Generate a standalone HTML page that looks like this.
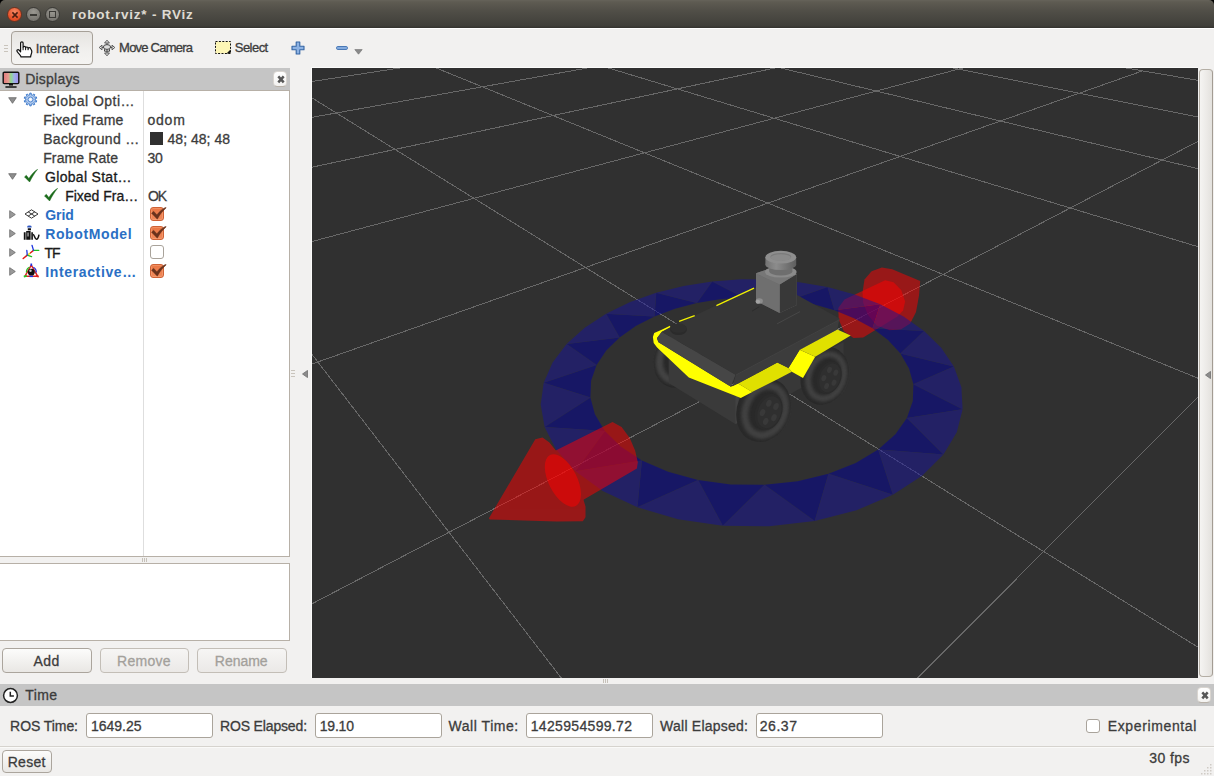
<!DOCTYPE html>
<html><head><meta charset="utf-8"><title>robot.rviz* - RViz</title>
<style>
html,body{margin:0;padding:0;}
body{width:1214px;height:776px;overflow:hidden;position:relative;background:#f2f1f0;font-family:"Liberation Sans",sans-serif;}
.a{position:absolute;box-sizing:border-box;}
.t{position:absolute;white-space:pre;line-height:normal;-webkit-text-stroke:0.3px currentColor;}
.btn{position:absolute;box-sizing:border-box;border:1px solid #aba59d;border-radius:4px;background:linear-gradient(#fcfcfb,#e9e7e4);}
.btn.dis{border-color:#c3beb7;background:linear-gradient(#f6f5f4,#ebe9e7);}
.inp{position:absolute;box-sizing:border-box;border:1px solid #aaa49b;border-radius:3px;background:#fff;}
.xb{position:absolute;box-sizing:border-box;width:14.4px;height:15.6px;border:1px solid #d9d5d0;border-bottom-color:#b9b2a9;border-radius:4.5px;background:linear-gradient(#ffffff,#f3f2f0);}
.cb{position:absolute;box-sizing:border-box;width:14px;height:14px;border-radius:3px;}
.cb.on{background:linear-gradient(#ea7644,#f0895b);border:1px solid #cf6236;box-shadow:inset 0 0 0 1px rgba(255,190,150,.35);}
.cb.off{background:#fff;border:1px solid #a9a39b;}
</style></head><body>

<div class="a" style="left:0;top:0;width:1214px;height:8px;background:#000"></div>
<div class="a" style="left:0;top:0;width:1214px;height:28px;border-radius:5px 5px 0 0;background:linear-gradient(#66635a 0,#5e5b52 2px,#504e47 40%,#403f3a 92%,#33322e 100%);"></div>
<div class="a" style="left:7.0px;top:7.0px;width:15px;height:15px;border-radius:50%;border:1px solid #6b3321;background:radial-gradient(circle at 50% 30%,#f58a66,#e8532b 60%,#d6421c)"></div><svg class="a" style="left:10.5px;top:10.5px" width="8" height="8" viewBox="0 0 8 8"><path d="M1.4 1.4L6.6 6.6M6.6 1.4L1.4 6.6" stroke="#4a1d10" stroke-width="1.5" fill="none"/></svg>
<div class="a" style="left:26.299999999999997px;top:7.0px;width:15px;height:15px;border-radius:50%;border:1px solid #3a3935;background:radial-gradient(circle at 50% 30%,#9a9891,#7e7c76 60%,#6c6a65)"></div><div class="a" style="left:30.299999999999997px;top:14.0px;width:7px;height:1.5px;background:#3b3a36"></div>
<div class="a" style="left:45.0px;top:7.0px;width:15px;height:15px;border-radius:50%;border:1px solid #3a3935;background:radial-gradient(circle at 50% 30%,#9a9891,#7e7c76 60%,#6c6a65)"></div><div class="a" style="left:49.0px;top:11.0px;width:7px;height:7px;border:1.3px solid #3b3a36"></div>
<span class="t " style="left:72.10px;top:6.78px;font-size:13.5px;letter-spacing:0.776px;color:#dfdbd2;font-weight:bold;-webkit-text-stroke:0;">robot.rviz* - RViz</span>
<div class="a" style="left:0;top:28px;width:1214px;height:1px;background:#fff"></div>
<div class="a" style="left:4px;top:45px;width:4px;height:1px;background:#c9c4bc"></div>
<div class="a" style="left:4px;top:48px;width:4px;height:1px;background:#c9c4bc"></div>
<div class="a" style="left:4px;top:51px;width:4px;height:1px;background:#c9c4bc"></div>
<div class="btn" style="left:11px;top:31px;width:82px;height:34px;border-color:#a6a098;background:linear-gradient(#e6e4e1,#f1f0ee 60%,#f5f4f2)"></div>
<svg class="a" style="left:15.5px;top:40.5px" width="17" height="17" viewBox="0 0 17 17"><path d="M4.600 10.800V2.100C4.600 0.500 7.100 0.500 7.100 2.100V6.600C7.100 5 9.600 5 9.600 6.600V7.200C9.600 5.600 12.100 5.600 12.100 7.200V7.800C12.100 6.300 14.600 6.300 14.700 7.800C15.800 9 15.900 11.500 15.300 13C15 14 14.600 14.800 14.600 15.900H5C4.800 14.600 3.800 13.800 2.800 12.600C1.900 11.600 1 10.800 0.900 9.900C0.800 8.700 2.200 8.200 3 9z" fill="#fff" stroke="#111" stroke-width="1.200" stroke-linejoin="round"/><path d="M7.100 6.600v2.600M9.600 7.200v2M12.100 7.800v1.400" stroke="#111" stroke-width="1" fill="none"/></svg>
<span class="t " style="left:35.70px;top:41.23px;font-size:13px;letter-spacing:-0.039px;color:#3c3c3c;">Interact</span>
<svg class="a" style="left:98px;top:39px" width="18" height="18" viewBox="0 0 18 18" fill="none" stroke="#555" stroke-width="1"><path d="M9 1.2L6.6 4h4.8zM9 16.8L6.6 14h4.8zM1.2 8.5L4 6.2v4.6zM16.8 8.5L14 6.2v4.6z" fill="#eee"/><path d="M9 4v10M4 8.5h10"/><ellipse cx="9" cy="8" rx="3.6" ry="2.4" fill="#ddd" stroke="#444"/><path d="M6.5 10.2v2h5v-2" stroke="#444"/></svg>
<span class="t " style="left:119.10px;top:40.23px;font-size:13px;letter-spacing:-0.779px;color:#3c3c3c;">Move Camera</span>
<svg class="a" style="left:215px;top:41px" width="16" height="13" viewBox="0 0 16 13"><rect x="0.5" y="0.5" width="15" height="12" fill="#fdf6b6" stroke="#111" stroke-width="1" stroke-dasharray="2 1.4"/><path d="M15.5 8.5v4h-4z" fill="#111"/></svg>
<span class="t " style="left:234.80px;top:40.23px;font-size:13px;letter-spacing:-0.545px;color:#3c3c3c;">Select</span>
<svg class="a" style="left:291px;top:41px" width="14" height="14" viewBox="0 0 14 14"><path d="M5.2 1h3.6v4.2H13v3.6H8.8V13H5.2V8.8H1V5.2h4.2z" fill="#8db2e3" stroke="#3465a4" stroke-width="1.1" stroke-linejoin="round"/></svg>
<svg class="a" style="left:336px;top:45.5px" width="13" height="5" viewBox="0 0 13 5"><rect x="0.6" y="0.6" width="10.8" height="2.8" rx="1" fill="#8db2e3" stroke="#3d6fb0" stroke-width="1"/></svg>
<svg class="a" style="left:354px;top:49px" width="9" height="6" viewBox="0 0 9 6"><path d="M0.8 0.6h7.4L4.5 5.2z" fill="#8a8a8a" stroke="#6e6e6e" stroke-width=".6"/></svg>
<div class="a" style="left:0;top:68px;width:290px;height:22px;background:#c5c5c5"></div>
<svg class="a" style="left:2px;top:71px" width="18" height="18" viewBox="0 0 18 18"><defs><linearGradient id="mg" x1="0" x2="1" y1="0" y2="0"><stop offset="0" stop-color="#e2777a"/><stop offset=".33" stop-color="#e59a90"/><stop offset=".5" stop-color="#8fd98f"/><stop offset=".7" stop-color="#9fb0e8"/><stop offset="1" stop-color="#a08cf0"/></linearGradient></defs><rect x="1.2" y="1.2" width="15.6" height="11.4" rx="1" fill="url(#mg)" stroke="#111" stroke-width="1.4"/><path d="M7 13h4v1.6H7z" fill="#111"/><path d="M4 16h10" stroke="#111" stroke-width="1.6" stroke-linecap="round"/></svg>
<span class="t " style="left:25.20px;top:71.13px;font-size:14px;letter-spacing:0.218px;color:#3c3c3c;">Displays</span>
<div class="xb" style="left:272.8px;top:71.400px"><svg width="13" height="14" viewBox="0 0 13 14" style="position:absolute;left:0;top:0"><path d="M4.300 4.400l5.400 6M9.700 4.400L4.300 10.400" stroke="#575757" stroke-width="2.500"/></svg></div>
<div class="a" style="left:-1px;top:90px;width:291px;height:467px;background:#fff;border:1px solid #b7b0a7"></div>
<div class="a" style="left:143px;top:91px;width:1px;height:465px;background:#dedede"></div>
<svg class="a" style="left:8px;top:97.0px" width="9" height="7" viewBox="0 0 9 7"><path d="M0.700 0.700h7.600L4.500 6.300z" fill="#8e8e8e" stroke="#666" stroke-width=".8" stroke-linejoin="round"/></svg>
<svg class="a" style="left:23px;top:92px" width="15" height="15" viewBox="-7.5 -7.5 15 15"><path d="M-0.79 -4.63L-0.68 -6.36L0.68 -6.36L0.79 -4.63L2.08 -4.21L3.19 -5.55L4.29 -4.75L3.36 -3.28L4.16 -2.19L5.84 -2.62L6.26 -1.32L4.65 -0.68L4.65 0.68L6.26 1.32L5.84 2.62L4.16 2.19L3.36 3.28L4.29 4.75L3.19 5.55L2.08 4.21L0.79 4.63L0.68 6.36L-0.68 6.36L-0.79 4.63L-2.08 4.21L-3.19 5.55L-4.29 4.75L-3.36 3.28L-4.16 2.19L-5.84 2.62L-6.26 1.32L-4.65 0.68L-4.65 -0.68L-6.26 -1.32L-5.84 -2.62L-4.16 -2.19L-3.36 -3.28L-4.29 -4.75L-3.19 -5.55L-2.08 -4.21z" fill="#b3cbed" stroke="#3f7bcb" stroke-width="1" stroke-linejoin="round"/><circle r="2.500" fill="#dfe9f7" stroke="#3f7bcb" stroke-width=".9"/><circle r="1.100" fill="#fff"/></svg>
<span class="t " style="left:45.20px;top:92.63px;font-size:14px;letter-spacing:0.485px;color:#3c3c3c;">Global Opti…</span>
<span class="t " style="left:43.20px;top:111.63px;font-size:14px;letter-spacing:0.164px;color:#3c3c3c;">Fixed Frame</span>
<span class="t " style="left:147.50px;top:111.63px;font-size:14px;letter-spacing:0.767px;color:#3c3c3c;">odom</span>
<span class="t " style="left:43.20px;top:130.63px;font-size:14px;letter-spacing:0.307px;color:#3c3c3c;">Background …</span>
<div class="a" style="left:150px;top:132.0px;width:13px;height:13px;background:#303030"></div>
<span class="t " style="left:167.50px;top:130.63px;font-size:14px;letter-spacing:0.028px;color:#3c3c3c;">48; 48; 48</span>
<span class="t " style="left:43.20px;top:149.63px;font-size:14px;letter-spacing:0.118px;color:#3c3c3c;">Frame Rate</span>
<span class="t " style="left:147.50px;top:149.63px;font-size:14px;letter-spacing:-0.262px;color:#3c3c3c;">30</span>
<svg class="a" style="left:8px;top:173.0px" width="9" height="7" viewBox="0 0 9 7"><path d="M0.700 0.700h7.600L4.500 6.300z" fill="#8e8e8e" stroke="#666" stroke-width=".8" stroke-linejoin="round"/></svg>
<svg class="a" style="left:24px;top:169.0px" width="15" height="14" viewBox="0 0 15 14"><path d="M0.500 7.900L2.300 6.300 4.900 9.600C7.300 5.600 10 2.600 13.600 0.300 10.600 4 8 8.200 5.600 13z" fill="#1b6b1b" stroke="#1b6b1b" stroke-width=".5" stroke-linejoin="round"/></svg>
<span class="t " style="left:45.10px;top:168.63px;font-size:14px;letter-spacing:0.295px;color:#1a1a1a;">Global Stat…</span>
<svg class="a" style="left:44px;top:188.0px" width="15" height="14" viewBox="0 0 15 14"><path d="M0.500 7.900L2.300 6.300 4.900 9.600C7.300 5.600 10 2.600 13.600 0.300 10.600 4 8 8.200 5.600 13z" fill="#1b6b1b" stroke="#1b6b1b" stroke-width=".5" stroke-linejoin="round"/></svg>
<span class="t " style="left:65.20px;top:187.63px;font-size:14px;letter-spacing:-0.003px;color:#1a1a1a;">Fixed Fra…</span>
<span class="t " style="left:147.90px;top:187.63px;font-size:14px;letter-spacing:-1.150px;color:#3c3c3c;">OK</span>
<svg class="a" style="left:9px;top:210.0px" width="7" height="9" viewBox="0 0 7 9"><path d="M0.700 0.700v7.600L6.300 4.500z" fill="#9a9a9a" stroke="#6a6a6a" stroke-width=".8" stroke-linejoin="round"/></svg>
<svg class="a" style="left:24px;top:208.5px" width="15" height="10" viewBox="0 0 15 10"><path d="M7.5 0.8L14 5 7.500 9.200 1 5zM4.200 2.900l6.600 4.200M10.800 2.900L4.200 7.100" fill="#fff" stroke="#222" stroke-width=".9" stroke-linejoin="round"/></svg>
<span class="t " style="left:45.20px;top:206.63px;font-size:14px;letter-spacing:-0.050px;color:#2a6fc4;font-weight:bold;-webkit-text-stroke:0;">Grid</span>
<div class="cb on" style="left:150px;top:207.0px"></div><svg class="a" style="left:150px;top:207.0px" width="17" height="14" viewBox="0 0 17 14"><path d="M1.500 6.200L3.600 4.200 6.900 7.800C9.300 4.600 12.300 1.900 15.700 0.200L16.200 0.900C12.500 3.900 9.800 7.600 7.300 12.200z" fill="#6a321d" stroke="#6a321d" stroke-width=".4" stroke-linejoin="round"/></svg>
<svg class="a" style="left:9px;top:229.0px" width="7" height="9" viewBox="0 0 7 9"><path d="M0.700 0.700v7.600L6.300 4.500z" fill="#9a9a9a" stroke="#6a6a6a" stroke-width=".8" stroke-linejoin="round"/></svg>
<svg class="a" style="left:23px;top:225.0px" width="17" height="16" viewBox="0 0 17 16"><ellipse cx="6.400" cy="1.900" rx="2.300" ry="1.300" fill="#2d55c0"/><path d="M4.300 2.400h4.200v.8H4.300z" fill="#dfe6f5"/><path d="M4.800 3.300h3.200v2H4.800z" fill="#111"/><path d="M0.800 7.200h1.800v7.600H0.800zM3.200 5.900h4.400v8.900H3.200zM8.300 7.200h1.600v7.600H8.300z" fill="#111"/><path d="M4.300 7.600h1.500v4H4.300z" fill="#9a9a9a"/><path d="M10 9.600c1.600 0 1.800 4.600 3.400 4.600 1.400 0 2.200-2.400 2.600-4.600" fill="none" stroke="#111" stroke-width="1.500"/></svg>
<span class="t " style="left:45.20px;top:225.63px;font-size:14px;letter-spacing:0.614px;color:#2a6fc4;font-weight:bold;-webkit-text-stroke:0;">RobotModel</span>
<div class="cb on" style="left:150px;top:226.0px"></div><svg class="a" style="left:150px;top:226.0px" width="17" height="14" viewBox="0 0 17 14"><path d="M1.500 6.200L3.600 4.200 6.900 7.800C9.300 4.600 12.300 1.900 15.700 0.200L16.200 0.900C12.500 3.900 9.800 7.600 7.300 12.200z" fill="#6a321d" stroke="#6a321d" stroke-width=".4" stroke-linejoin="round"/></svg>
<svg class="a" style="left:9px;top:248.0px" width="7" height="9" viewBox="0 0 7 9"><path d="M0.700 0.700v7.600L6.300 4.500z" fill="#9a9a9a" stroke="#6a6a6a" stroke-width=".8" stroke-linejoin="round"/></svg>
<svg class="a" style="left:22px;top:244.0px" width="18" height="16" viewBox="0 0 18 16" fill="none" stroke-linecap="round"><path d="M5.300 11.100L1.200 14.500" stroke="#e01818" stroke-width="1.500"/><path d="M5.300 11.100L9.500 12.600" stroke="#22c022" stroke-width="1.500"/><path d="M5.300 11.100L4.800 6.400" stroke="#2038e0" stroke-width="1.300"/><path d="M6.500 10.300L8.300 9" stroke="#e8d820" stroke-width="1.500"/><path d="M8.600 8.800L11.500 6.400" stroke="#e01818" stroke-width="1.400"/><path d="M11.500 6.400H16.700" stroke="#22c022" stroke-width="1.400"/><path d="M11.500 6.400L10 1.300" stroke="#2038e0" stroke-width="1.300"/></svg>
<span class="t " style="left:44.60px;top:244.63px;font-size:14px;letter-spacing:-1.025px;color:#1a1a1a;">TF</span>
<div class="cb off" style="left:150px;top:245.0px"></div>
<svg class="a" style="left:9px;top:267.0px" width="7" height="9" viewBox="0 0 7 9"><path d="M0.700 0.700v7.600L6.300 4.500z" fill="#9a9a9a" stroke="#6a6a6a" stroke-width=".8" stroke-linejoin="round"/></svg>
<svg class="a" style="left:23px;top:263.0px" width="17" height="16" viewBox="0 0 17 16"><path d="M8.300 2.200L14.600 13.200H2z" fill="none" stroke="#e02020" stroke-width="1.400" stroke-linejoin="round"/><path d="M3.400 9.500a5.600 5.600 0 0 1 3-5.200" fill="none" stroke="#20c020" stroke-width="1.200"/><path d="M10.300 4.300a5.600 5.600 0 0 1 3 5.200" fill="none" stroke="#2030e0" stroke-width="1.200"/><circle cx="8.300" cy="9.200" r="3.400" fill="#111"/><circle cx="7.500" cy="7.800" r="1.200" fill="#c8c8c8"/><path d="M8.300 0.500v2.600" stroke="#2030e0" stroke-width="1.700"/><path d="M0.800 13.600l3-.8" stroke="#20c020" stroke-width="1.800"/><path d="M15.800 13.600l-3-.8" stroke="#e02020" stroke-width="1.800"/><path d="M6.500 13.400h3.600" stroke="#2030e0" stroke-width="1.400"/></svg>
<span class="t " style="left:45.20px;top:263.63px;font-size:14px;letter-spacing:0.640px;color:#2a6fc4;font-weight:bold;-webkit-text-stroke:0;">Interactive…</span>
<div class="cb on" style="left:150px;top:264.0px"></div><svg class="a" style="left:150px;top:264.0px" width="17" height="14" viewBox="0 0 17 14"><path d="M1.500 6.200L3.600 4.200 6.900 7.800C9.300 4.600 12.300 1.900 15.700 0.200L16.200 0.900C12.500 3.900 9.800 7.600 7.300 12.200z" fill="#6a321d" stroke="#6a321d" stroke-width=".4" stroke-linejoin="round"/></svg>
<div class="a" style="left:142px;top:558px;width:1px;height:4px;background:#c6c1b9"></div>
<div class="a" style="left:144px;top:558px;width:1px;height:4px;background:#c6c1b9"></div>
<div class="a" style="left:146px;top:558px;width:1px;height:4px;background:#c6c1b9"></div>
<div class="a" style="left:-1px;top:563px;width:291px;height:78px;background:#fff;border:1px solid #b7b0a7"></div>
<div class="btn" style="left:2px;top:648px;width:90px;height:25px"></div>
<span class="t " style="left:33.40px;top:652.53px;font-size:14px;letter-spacing:0.531px;color:#3c3c3c;">Add</span>
<div class="btn dis" style="left:100px;top:648px;width:89px;height:25px"></div>
<span class="t " style="left:117.10px;top:652.53px;font-size:14px;letter-spacing:0.275px;color:#a3a09b;">Remove</span>
<div class="btn dis" style="left:197px;top:648px;width:90px;height:25px"></div>
<span class="t " style="left:214.80px;top:652.53px;font-size:14px;letter-spacing:-0.027px;color:#a3a09b;">Rename</span>
<div class="a" style="left:291px;top:370px;width:4px;height:1px;background:#c9c4bc"></div>
<div class="a" style="left:291px;top:373px;width:4px;height:1px;background:#c9c4bc"></div>
<div class="a" style="left:291px;top:376px;width:4px;height:1px;background:#c9c4bc"></div>
<svg class="a" style="left:301.5px;top:369.5px" width="6" height="8" viewBox="0 0 6 8"><path d="M5.500 0.400v7.200L0.500 4z" fill="#8c8c8c" stroke="#666" stroke-width=".7"/></svg>
<div class="a" style="left:311px;top:67px;width:1px;height:611px;background:#fbfbfa"></div>
<div class="a" style="left:311px;top:67px;width:887px;height:1px;background:#fbfbfa"></div>
<svg class="a" style="left:312px;top:68px" width="886" height="610" viewBox="312 68 886 610"><defs>
<radialGradient id="tire" cx="0.5" cy="0.5" r="0.5"><stop offset="0" stop-color="#2c2c2c"/><stop offset="0.62" stop-color="#2e2e2e"/><stop offset="0.800" stop-color="#434343"/><stop offset="0.930" stop-color="#333333"/><stop offset="1" stop-color="#282828"/></radialGradient>
<radialGradient id="tire2" cx="0.5" cy="0.5" r="0.5"><stop offset="0" stop-color="#2c2c2c"/><stop offset="0.55" stop-color="#2e2e2e"/><stop offset="0.780" stop-color="#414141"/><stop offset="0.920" stop-color="#343434"/><stop offset="1" stop-color="#272727"/></radialGradient>
<filter id="blur" x="-20%" y="-20%" width="140%" height="140%"><feGaussianBlur stdDeviation="1.6"/></filter>
<linearGradient id="cap" x1="0" x2="1" y1="0" y2="0"><stop offset="0" stop-color="#747474"/><stop offset="0.35" stop-color="#8c8c8c"/><stop offset="1" stop-color="#5e5e5e"/></linearGradient>
</defs><rect x="312" y="68" width="886" height="610" fill="#303030"/><g stroke="#686868" stroke-width="1" shape-rendering="crispEdges"><line x1="-1261.7" y1="323.6" x2="-21558.6" y2="8137.1"/><line x1="-731.0" y1="241.9" x2="-14432.8" y2="8045.2"/><line x1="-360.1" y1="184.9" x2="-7618.2" y2="8125.9"/><line x1="-86.4" y1="142.8" x2="-653.5" y2="8034.2"/><line x1="124.0" y1="110.4" x2="6290.9" y2="8114.8"/><line x1="290.7" y1="84.7" x2="13095.1" y2="8023.3"/><line x1="426.1" y1="63.9" x2="20168.7" y2="8103.6"/><line x1="538.2" y1="46.7" x2="9425.7" y2="2741.0"/><line x1="632.6" y1="32.2" x2="5006.7" y2="1088.3"/><line x1="713.2" y1="19.8" x2="3811.7" y2="641.4"/><line x1="782.7" y1="9.1" x2="3255.6" y2="433.4"/><line x1="-1261.7" y1="323.6" x2="782.7" y2="9.1"/><line x1="-1628.7" y1="464.9" x2="851.0" y2="20.8"/><line x1="-2321.1" y1="731.4" x2="931.2" y2="34.5"/><line x1="-4115.2" y1="1422.1" x2="1026.8" y2="50.9"/><line x1="-19884.5" y1="7492.7" x2="1142.7" y2="70.8"/><line x1="-13995.1" y1="8071.4" x2="1286.0" y2="95.4"/><line x1="-6455.8" y1="8062.8" x2="1468.0" y2="126.6"/><line x1="1069.7" y1="8054.2" x2="1706.5" y2="167.6"/><line x1="8581.3" y1="8045.6" x2="2032.8" y2="223.5"/><line x1="16079.1" y1="8037.1" x2="2506.2" y2="304.8"/><line x1="23563.0" y1="8028.6" x2="3255.6" y2="433.4"/></g><g fill="#ff0000" fill-opacity="0.5"><polygon points="862.5,292.5 864.5,279.6 871.6,271.3 881.9,267.4 892.2,269.3 920.2,280.9 919.0,295.8 916.0,311.9 910.2,323.5 901.2,329.3 889.6,330.2 876.7,325.4 867.7,314.4 863.2,302.8"/><polygon points="844.5,299.6 885.1,280.3 893.5,282.2 901.2,290.0 905.1,301.6 903.1,310.6 897.3,316.4 863.2,337.6 853.5,337.9 843.8,331.2 838.7,319.6 838.3,308.0"/></g><g opacity="0.5" shape-rendering="geometricPrecision"><polygon points="834.4,310.3 854.5,318.4 872.5,328.3 880.2,304.3" fill="#00009b" /><polygon points="872.5,328.3 888.0,340.1 900.4,353.5 924.1,331.0" fill="#00009b" /><polygon points="900.4,353.5 909.0,368.4 913.4,384.3 953.9,366.6" fill="#00009b" /><polygon points="913.4,384.3 912.8,401.0 906.9,417.9 962.6,409.2" fill="#00009b" /><polygon points="906.9,417.9 895.4,434.3 878.2,449.6 943.5,454.4" fill="#00009b" /><polygon points="878.2,449.6 855.7,463.0 828.5,473.8 892.9,494.8" fill="#00009b" /><polygon points="828.5,473.8 797.6,481.2 764.5,484.8 814.7,521.0" fill="#00009b" /><polygon points="764.5,484.8 730.8,484.4 698.1,479.9 722.8,525.7" fill="#00009b" /><polygon points="698.1,479.9 668.1,471.7 641.9,460.4 637.4,507.3" fill="#00009b" /><polygon points="641.9,460.4 620.7,446.5 604.9,430.9 575.4,471.3" fill="#00009b" /><polygon points="604.9,430.9 594.9,414.3 590.4,397.4 544.6,427.0" fill="#00009b" /><polygon points="590.4,397.4 591.1,380.8 596.6,365.1 543.7,382.7" fill="#00009b" /><polygon points="596.6,365.1 606.3,350.5 619.6,337.5 566.6,344.0" fill="#00009b" /><polygon points="619.6,337.5 635.8,326.1 654.5,316.5 606.1,313.7" fill="#00009b" /><polygon points="654.5,316.5 675.0,308.8 696.9,303.0 656.2,292.8" fill="#00009b" /><polygon points="696.9,303.0 719.8,299.3 743.3,297.5 712.2,281.4" fill="#00009b" /><polygon points="743.3,297.5 766.9,297.7 790.2,299.9 770.4,279.5" fill="#00009b" /><polygon points="790.2,299.9 812.8,304.1 834.4,310.3 827.5,287.1" fill="#00009b" /><polygon points="880.2,304.3 903.6,316.5 924.1,331.0 872.5,328.3" fill="#17149a" /><polygon points="924.1,331.0 941.2,347.8 953.9,366.6 900.4,353.5" fill="#17149a" /><polygon points="953.9,366.6 961.4,387.2 962.6,409.2 913.4,384.3" fill="#17149a" /><polygon points="962.6,409.2 956.9,431.9 943.5,454.4 906.9,417.9" fill="#17149a" /><polygon points="943.5,454.4 922.1,475.8 892.9,494.8 878.2,449.6" fill="#17149a" /><polygon points="892.9,494.8 856.6,510.2 814.7,521.0 828.5,473.8" fill="#17149a" /><polygon points="814.7,521.0 769.3,526.3 722.8,525.7 764.5,484.8" fill="#17149a" /><polygon points="722.8,525.7 678.1,519.2 637.4,507.3 698.1,479.9" fill="#17149a" /><polygon points="637.4,507.3 602.7,491.0 575.4,471.3 641.9,460.4" fill="#17149a" /><polygon points="575.4,471.3 556.0,449.6 544.6,427.0 604.9,430.9" fill="#17149a" /><polygon points="544.6,427.0 540.7,404.4 543.7,382.7 590.4,397.4" fill="#17149a" /><polygon points="543.7,382.7 552.6,362.4 566.6,344.0 596.6,365.1" fill="#17149a" /><polygon points="566.6,344.0 584.7,327.7 606.1,313.7 619.6,337.5" fill="#17149a" /><polygon points="606.1,313.7 630.2,302.0 656.2,292.8 654.5,316.5" fill="#17149a" /><polygon points="656.2,292.8 683.7,285.9 712.2,281.4 696.9,303.0" fill="#17149a" /><polygon points="712.2,281.4 741.2,279.3 770.4,279.5 743.3,297.5" fill="#17149a" /><polygon points="770.4,279.5 799.2,282.2 827.5,287.1 790.2,299.9" fill="#17149a" /><polygon points="827.5,287.1 854.6,294.5 880.2,304.3 834.4,310.3" fill="#17149a" /></g><g transform="translate(678.5,359) rotate(21)"><ellipse rx="24" ry="29.500" fill="#292929"/><ellipse cx="-1" rx="17.500" ry="22.500" fill="none" stroke="#424242" stroke-width="7" filter="url(#blur)"/></g><polygon points="668.7,358.8 668.7,383.1 735.3,424.0 735.3,396.3" fill="#3a3a3a" /><polygon points="735.3,396.3 735.3,424.0 746.8,419.1 798.2,389.4 843.6,365.7 843.6,342.0" fill="#383838" /><polygon points="735.3,396.3 735.3,424.0 738.8,422.6 738.8,395.4" fill="#424242" /><g transform="translate(824.7,375.9) rotate(21)"><ellipse rx="23.4" ry="29.5" fill="#292929"/><ellipse cx="1.6" cy="0" rx="17.3" ry="22.7" fill="none" stroke="#404040" stroke-width="6.1" filter="url(#blur)"/><ellipse cx="4.9" cy="0" rx="11.7" ry="16.8" fill="#2b2b2b"/><ellipse cx="5.6" cy="0" rx="10.1" ry="14.8" fill="#2f2f2f"/><ellipse cx="11.1" cy="3.0" rx="2.3" ry="3.2" fill="#393939"/><ellipse cx="5.4" cy="8.8" rx="2.3" ry="3.2" fill="#393939"/><ellipse cx="-0.0" cy="2.4" rx="2.3" ry="3.2" fill="#393939"/><ellipse cx="2.3" cy="-7.3" rx="2.3" ry="3.2" fill="#393939"/><ellipse cx="9.2" cy="-7.0" rx="2.3" ry="3.2" fill="#393939"/></g><g transform="translate(763.5,410.0) rotate(21)"><ellipse rx="26.4" ry="32.8" fill="#292929"/><ellipse cx="1.8" cy="0" rx="19.5" ry="25.3" fill="none" stroke="#404040" stroke-width="6.9" filter="url(#blur)"/><ellipse cx="5.5" cy="0" rx="13.2" ry="18.7" fill="#2b2b2b"/><ellipse cx="6.3" cy="0" rx="11.4" ry="16.4" fill="#2f2f2f"/><ellipse cx="12.5" cy="3.4" rx="2.6" ry="3.6" fill="#393939"/><ellipse cx="6.1" cy="9.8" rx="2.6" ry="3.6" fill="#393939"/><ellipse cx="-0.0" cy="2.7" rx="2.6" ry="3.6" fill="#393939"/><ellipse cx="2.6" cy="-8.2" rx="2.6" ry="3.6" fill="#393939"/><ellipse cx="10.4" cy="-7.8" rx="2.6" ry="3.6" fill="#393939"/></g><polygon points="670.0,325.8 661.7,329.8 654.2,333.1 652.9,337.0 653.7,342.9 657.1,347.6 688.8,377.5 740.8,398.0 752.3,392.1 738.2,383.4 730.9,386.7 658.5,342.3 656.9,338.3 661.7,332.1 670.6,327.9" fill="#ffff00" /><polygon points="738.2,383.4 777.3,362.6 788.5,367.9 791.8,371.8 778.0,379.1 752.0,392.1" fill="#e0e000" /><polygon points="788.5,367.9 799.7,349.8 815.2,356.7 803.0,378.0 791.8,371.8" fill="#ffff00" /><polygon points="799.7,349.8 837.3,329.5 850.7,335.6 815.2,356.7" fill="#e0e000" /><polygon points="661.7,331.7 735.6,374.6 730.9,386.7 658.5,342.3 656.9,338.3" fill="#464646" /><polygon points="735.8,375.1 839.3,319.8 837.3,329.5 799.7,349.8 788.5,367.9 777.3,362.6 732.5,386.3" fill="#3c3c3c" /><polygon points="661.7,331.7 670.6,327.1 716.0,305.5 754.0,288.3 771.0,280.5 839.5,318.5 839.3,319.8 735.8,375.1" fill="#363636" /><polyline points="735.8,375.1 839.3,319.8" stroke="#424242" stroke-width="1" fill="none"/><polyline points="716.4,305.6 754.0,288.2" stroke="#f2f200" stroke-width="1.300" fill="none"/><polyline points="679.1,321.4 694.7,315.6" stroke="#f2f200" stroke-width="1.300" fill="none"/><polyline points="777.1,323.8 800.0,311.6" stroke="#474747" stroke-width="1" fill="none"/><polyline points="752.0,311.2 759.3,306.7" stroke="#2c2c2c" stroke-width="1" fill="none"/><ellipse cx="678.5" cy="329.8" rx="8.300" ry="5.200" fill="#2b2b2b"/><ellipse cx="678.5" cy="328.2" rx="8.300" ry="4.600" fill="#2f2f2f"/><polygon points="756.0,273.3 771.8,267.7 796.8,274.0 796.8,305.0 779.7,312.9 756.0,301.0" fill="#6a6a6a" /><polygon points="779.7,284.5 796.8,274.0 796.8,305.0 779.7,312.9" fill="#383838" /><polygon points="756.0,273.3 779.7,284.5 779.7,312.9 756.0,301.0" fill="#6f6f6f" /><polygon points="756.0,273.3 771.8,267.7 796.8,274.0 779.7,284.5" fill="#777777" /><ellipse cx="780.8" cy="272.0" rx="15.800" ry="5.600" fill="#8a8a8a"/><rect x="769.2" y="264.4" width="23.200" height="7" fill="#6e6e6e"/><ellipse cx="780.8" cy="271.4" rx="11.600" ry="4" fill="#6e6e6e"/><rect x="765.4" y="257.2" width="30.800" height="7.500" fill="url(#cap)"/><ellipse cx="780.8" cy="264.7" rx="15.400" ry="5.200" fill="url(#cap)"/><ellipse cx="780.8" cy="257.2" rx="15.400" ry="6.400" fill="#8e8e8e"/><ellipse cx="780.8" cy="256.8" rx="10.500" ry="3.900" fill="#7b7b7b"/><ellipse cx="780.8" cy="257.6" rx="10" ry="3.400" fill="#8a8a8a"/><ellipse cx="759.3" cy="301.0" rx="3.600" ry="2.700" fill="#8c8c8c"/><ellipse cx="757.9" cy="301.8" rx="2.200" ry="2" fill="#a2a2a2"/><g opacity="0.5" fill="#ff0000"><polygon points="488.9,518.2 535.3,439.3 542.5,437.5 549.4,442.4 560.2,455.9 571.0,472.2 580.1,488.4 585.5,506.5 585.5,517.3 582.8,521.3 556.6,521.6 524.1,520.5 489.8,519.4"/><polygon points="544.3,456.3 612.5,422.0 621.6,427.1 629.7,437.9 635.1,450.5 637.8,462.3 636.9,468.6 573.2,505.7 563.8,501.0 554.8,490.2 546.7,475.8 543.1,463.2"/></g><ellipse cx="562.9" cy="480.5" rx="14.200" ry="28.500" transform="rotate(-27 562.9 480.5)" fill="#ff0000" fill-opacity="0.5"/></svg>
<div class="a" style="left:1199px;top:69px;width:14px;height:608px;border:1px solid #b4aea5;border-right-color:#a39c93;border-radius:4px;background:linear-gradient(90deg,#f5f4f2,#ebe9e6 60%,#e3e1dd)"></div>
<svg class="a" style="left:1204.5px;top:370.5px" width="6" height="8" viewBox="0 0 6 8"><path d="M5.500 0.400v7.200L0.500 4z" fill="#8c8c8c" stroke="#666" stroke-width=".7"/></svg>
<div class="a" style="left:603px;top:679px;width:1px;height:4px;background:#c6c1b9"></div>
<div class="a" style="left:605px;top:679px;width:1px;height:4px;background:#c6c1b9"></div>
<div class="a" style="left:607px;top:679px;width:1px;height:4px;background:#c6c1b9"></div>
<div class="a" style="left:0;top:684px;width:1214px;height:22px;background:#c5c5c5"></div>
<svg class="a" style="left:2px;top:687px" width="17" height="17" viewBox="0 0 17 17"><circle cx="8.500" cy="8.500" r="6.900" fill="#fff" stroke="#222" stroke-width="1.500"/><path d="M8.300 4.800v4.200h3.600" fill="none" stroke="#222" stroke-width="1.500"/></svg>
<span class="t " style="left:25.30px;top:687.13px;font-size:14px;letter-spacing:0.413px;color:#3c3c3c;">Time</span>
<div class="xb" style="left:1196.800px;top:687.200px"><svg width="13" height="14" viewBox="0 0 13 14" style="position:absolute;left:0;top:0"><path d="M4.300 4.400l5.400 6M9.700 4.400L4.300 10.400" stroke="#575757" stroke-width="2.500"/></svg></div>
<span class="t " style="left:10.10px;top:718.33px;font-size:14px;letter-spacing:-0.067px;color:#3c3c3c;">ROS Time:</span>
<div class="inp" style="left:86px;top:713px;width:127px;height:25px"></div>
<span class="t " style="left:90.90px;top:718.33px;font-size:14px;letter-spacing:0.013px;color:#3c3c3c;">1649.25</span>
<span class="t " style="left:220.00px;top:718.33px;font-size:14px;letter-spacing:-0.153px;color:#3c3c3c;">ROS Elapsed:</span>
<div class="inp" style="left:315px;top:713px;width:127px;height:25px"></div>
<span class="t " style="left:319.70px;top:718.33px;font-size:14px;letter-spacing:-0.191px;color:#3c3c3c;">19.10</span>
<span class="t " style="left:448.50px;top:718.33px;font-size:14px;letter-spacing:0.543px;color:#3c3c3c;">Wall Time:</span>
<div class="inp" style="left:526px;top:713px;width:127px;height:25px"></div>
<span class="t " style="left:530.70px;top:718.33px;font-size:14px;letter-spacing:0.332px;color:#3c3c3c;">1425954599.72</span>
<span class="t " style="left:660.10px;top:718.33px;font-size:14px;letter-spacing:0.236px;color:#3c3c3c;">Wall Elapsed:</span>
<div class="inp" style="left:756px;top:713px;width:127px;height:25px"></div>
<span class="t " style="left:759.70px;top:718.33px;font-size:14px;letter-spacing:0.559px;color:#3c3c3c;">26.37</span>
<div class="cb off" style="left:1086px;top:719px"></div>
<span class="t " style="left:1107.70px;top:718.13px;font-size:14px;letter-spacing:0.638px;color:#3c3c3c;">Experimental</span>
<div class="a" style="left:0;top:746px;width:1214px;height:1px;background:#d6d3ce"></div>
<div class="a" style="left:0;top:747px;width:1214px;height:1px;background:#fafaf9"></div>
<div class="btn" style="left:2px;top:750px;width:50px;height:23px"></div>
<span class="t " style="left:7.70px;top:753.93px;font-size:14px;letter-spacing:0.284px;color:#3c3c3c;">Reset</span>
<span class="t " style="left:1149.30px;top:749.83px;font-size:14px;letter-spacing:0.395px;color:#3c3c3c;">30 fps</span>
<svg class="a" style="left:0;top:0" width="1214" height="776"><rect x="1210" y="764" width="1.500" height="1.500" fill="#cfcbc5"/><rect x="1207" y="767" width="1.500" height="1.500" fill="#cfcbc5"/><rect x="1210" y="767" width="1.500" height="1.500" fill="#cfcbc5"/><rect x="1204" y="770" width="1.500" height="1.500" fill="#cfcbc5"/><rect x="1207" y="770" width="1.500" height="1.500" fill="#cfcbc5"/><rect x="1210" y="770" width="1.500" height="1.500" fill="#cfcbc5"/><rect x="1201" y="773" width="1.500" height="1.500" fill="#cfcbc5"/><rect x="1204" y="773" width="1.500" height="1.500" fill="#cfcbc5"/><rect x="1207" y="773" width="1.500" height="1.500" fill="#cfcbc5"/><rect x="1210" y="773" width="1.500" height="1.500" fill="#cfcbc5"/></svg>
</body></html>
